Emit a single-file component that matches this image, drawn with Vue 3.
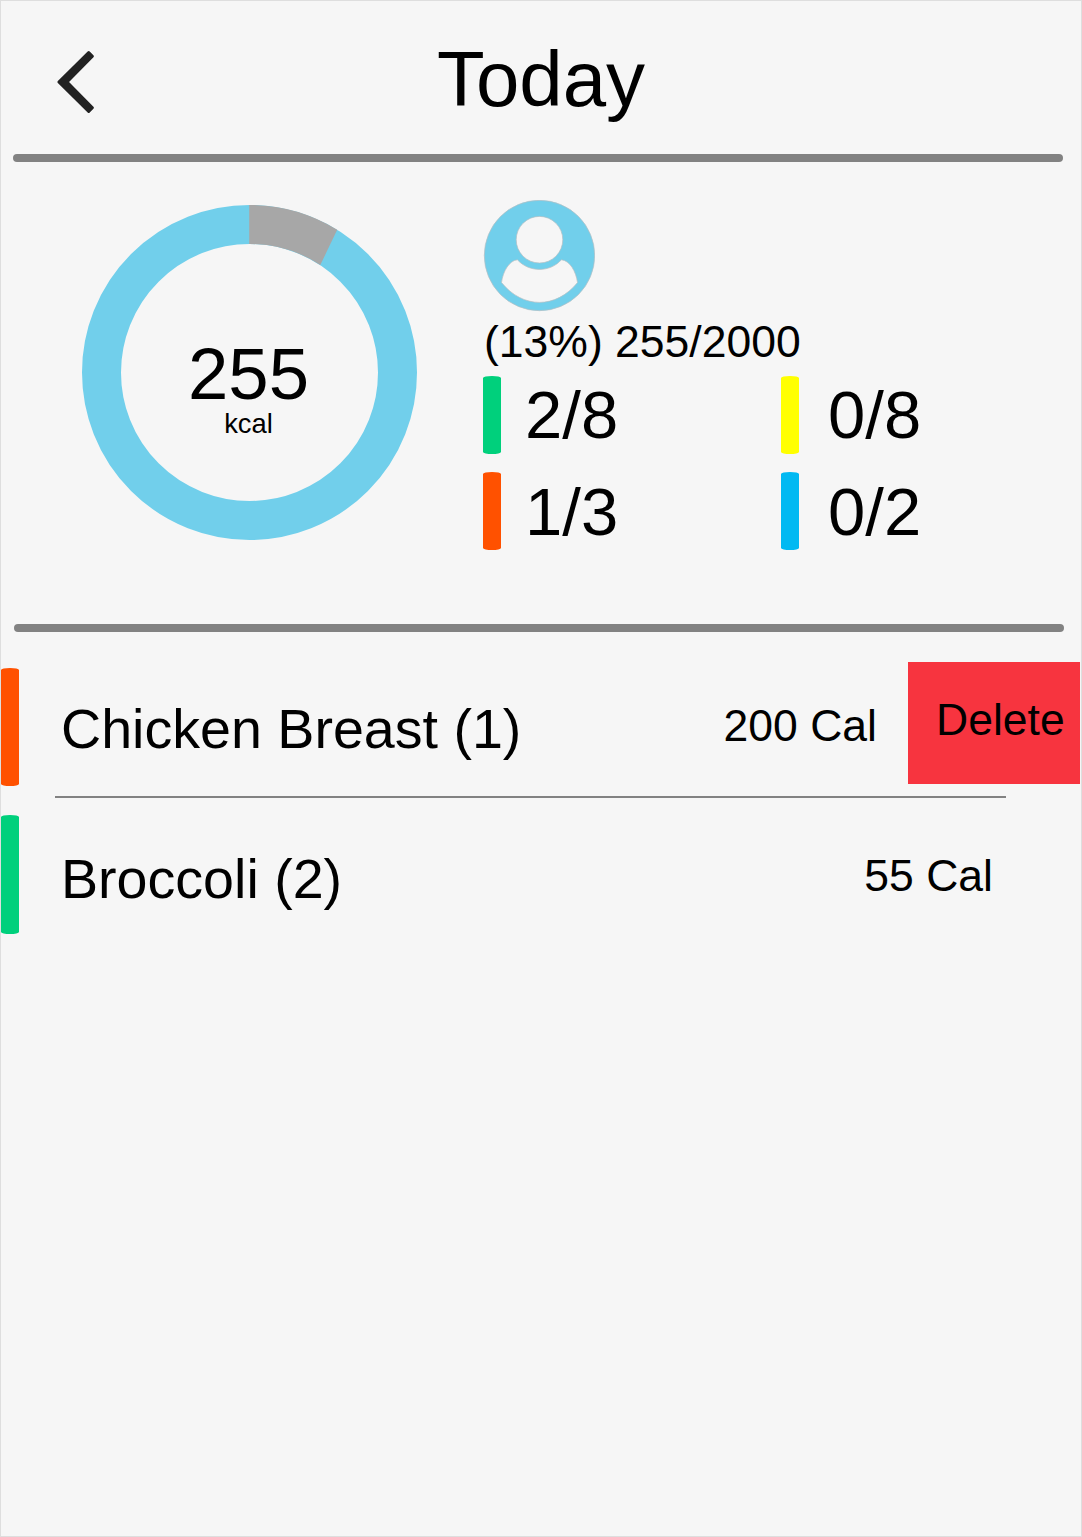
<script setup>
const portions = [
  { tone: 'green', value: '2/8' },
  { tone: 'yellow', value: '0/8' },
  { tone: 'orange', value: '1/3' },
  { tone: 'blue', value: '0/2' },
]
</script>

<template>
  <main class="screen">
    <header class="header">
      <svg class="back" width="40" height="68" viewBox="0 0 40 68" aria-label="Back">
        <path
          d="M2.9 34 32.7 4.5 36.4 8.2 11 34 36.4 59.8 32.7 63.5Z"
          fill="#222"
          stroke="#222"
          stroke-width="3"
          stroke-linejoin="round"
        />
      </svg>
      <h1 class="text title">Today</h1>
    </header>

    <div class="rule"></div>

    <section class="summary">
      <div class="donut">
        <svg width="335" height="335" viewBox="0 0 335 335">
          <circle cx="167.5" cy="167.5" r="148" fill="none" stroke="#71cfeb" stroke-width="39" />
          <path
            d="M167.2 0A167.5 167.5 0 0 1 255.2 24.8L238.3 60A128.5 128.5 0 0 0 167.2 39Z"
            fill="#a7a7a7"
          />
        </svg>
        <div class="total">
          <span class="text total-value">255</span>
          <span class="text total-unit">kcal</span>
        </div>
      </div>

      <div class="stats">
        <svg class="avatar" width="112" height="112" viewBox="0 0 112 112">
          <g stroke="#b4bfc3" stroke-width=".7">
            <circle cx="56.5" cy="55.5" r="55.2" fill="#71cfeb" />
            <circle cx="56.5" cy="39.7" r="23.3" fill="#f6f6f6" />
            <path
              d="M18.5 82.6C20 71 26.5 60.5 34.4 59.8C46 72.6 67 72.6 78.4 59.8C86.5 60.5 93 71 94.5 82.6C73 109 40 109 18.5 82.6Z"
              fill="#f6f6f6"
            />
          </g>
        </svg>
        <p class="text progress">(13%) 255/2000</p>
        <div class="portions">
          <div v-for="p in portions" :key="p.tone" class="portion">
            <i class="tag" :class="p.tone"></i>
            <span class="text portion-value">{{ p.value }}</span>
          </div>
        </div>
      </div>
    </section>

    <div class="rule rule-lower"></div>

    <section class="list">
      <div class="row first">
        <i class="tag orange"></i>
        <span class="text name">Chicken Breast (1)</span>
        <span class="text calories">200 Cal</span>
        <button class="delete"><span class="text">Delete</span></button>
      </div>
      <div class="separator"></div>
      <div class="row second">
        <i class="tag green"></i>
        <span class="text name">Broccoli (2)</span>
        <span class="text calories">55 Cal</span>
      </div>
    </section>
  </main>
</template>

<style>
body {
  background: #f6f6f6;
}
</style>

<style scoped>
.screen {
  box-sizing: border-box;
  width: 1082px;
  height: 1537px;
  overflow: hidden;
  border: 1px solid #dedede;
  background: #f6f6f6;
  color: #000;
  font-family: "Liberation Sans", Arial, Helvetica, sans-serif;
}
.text {
  display: block;
  margin: 0;
  font-weight: 400;
  line-height: 1;
  white-space: nowrap;
}
.header {
  display: grid;
  grid-template-columns: 160px 1fr 160px;
  height: 153px;
}
.back {
  margin: 47px 0 0 55px;
}
.title {
  margin-top: 39px;
  font-size: 78px;
  text-align: center;
}
.rule {
  width: 1050px;
  height: 8px;
  margin-left: 12px;
  border-radius: 4px;
  background: #828282;
}
.rule-lower {
  margin-left: 13px;
}
.summary {
  display: flex;
  height: 462px;
}
.donut {
  display: grid;
  align-self: flex-start;
  width: 335px;
  height: 335px;
  margin: 43px 0 0 81px;
}
.donut > * {
  grid-area: 1 / 1;
}
.total {
  display: flex;
  flex-direction: column;
  align-items: center;
  padding: 133px 2px 0 0;
}
.total-value {
  height: 72px;
  font-size: 72.5px;
}
.total-unit {
  font-size: 27.4px;
}
.stats {
  margin: 38px 0 0 66px;
}
.avatar {
  display: block;
}
.progress {
  height: 45px;
  margin: 8px 0 11px 1px;
  font-size: 44.5px;
}
.portions {
  display: grid;
  grid-template-columns: 298px 298px;
  row-gap: 18px;
}
.portion {
  display: flex;
}
.portion:nth-child(even) {
  column-gap: 5px;
}
.tag {
  flex: none;
  width: 18px;
  height: 78px;
  border-radius: 50% / 2px;
}
.orange {
  background: #ff5100;
}
.green {
  background: #00d07c;
}
.yellow {
  background: #ffff00;
}
.blue {
  background: #00b9f2;
}
.portion-value {
  margin: 5px 0 0 24px;
  font-size: 67px;
}
.portion:nth-child(n + 3) .portion-value {
  margin-top: 6px;
}
.list {
  padding-top: 30px;
}
.row {
  display: flex;
}
.row .tag {
  height: 118px;
  margin-top: 6px;
}
.first {
  height: 134px;
}
.second {
  height: 136px;
}
.row.second .tag {
  height: 119px;
  margin-top: 17px;
}
.name {
  margin: 40px 0 0 42px;
  font-size: 55.6px;
}
.second .name {
  margin-top: 54px;
}
.calories {
  margin: 42px 31px 0 auto;
  font-size: 44.5px;
}
.second .calories {
  margin: 56px 88px 0 auto;
}
.delete {
  display: flex;
  width: 172px;
  height: 122px;
  margin-right: 1px;
  padding: 36px 0 0 28px;
  border: 0;
  background: #f7343f;
  color: #000;
  font: 44.5px "Liberation Sans", Arial, sans-serif;
}
.separator {
  width: 951px;
  height: 2px;
  margin-left: 54px;
  background: #828282;
}
</style>
